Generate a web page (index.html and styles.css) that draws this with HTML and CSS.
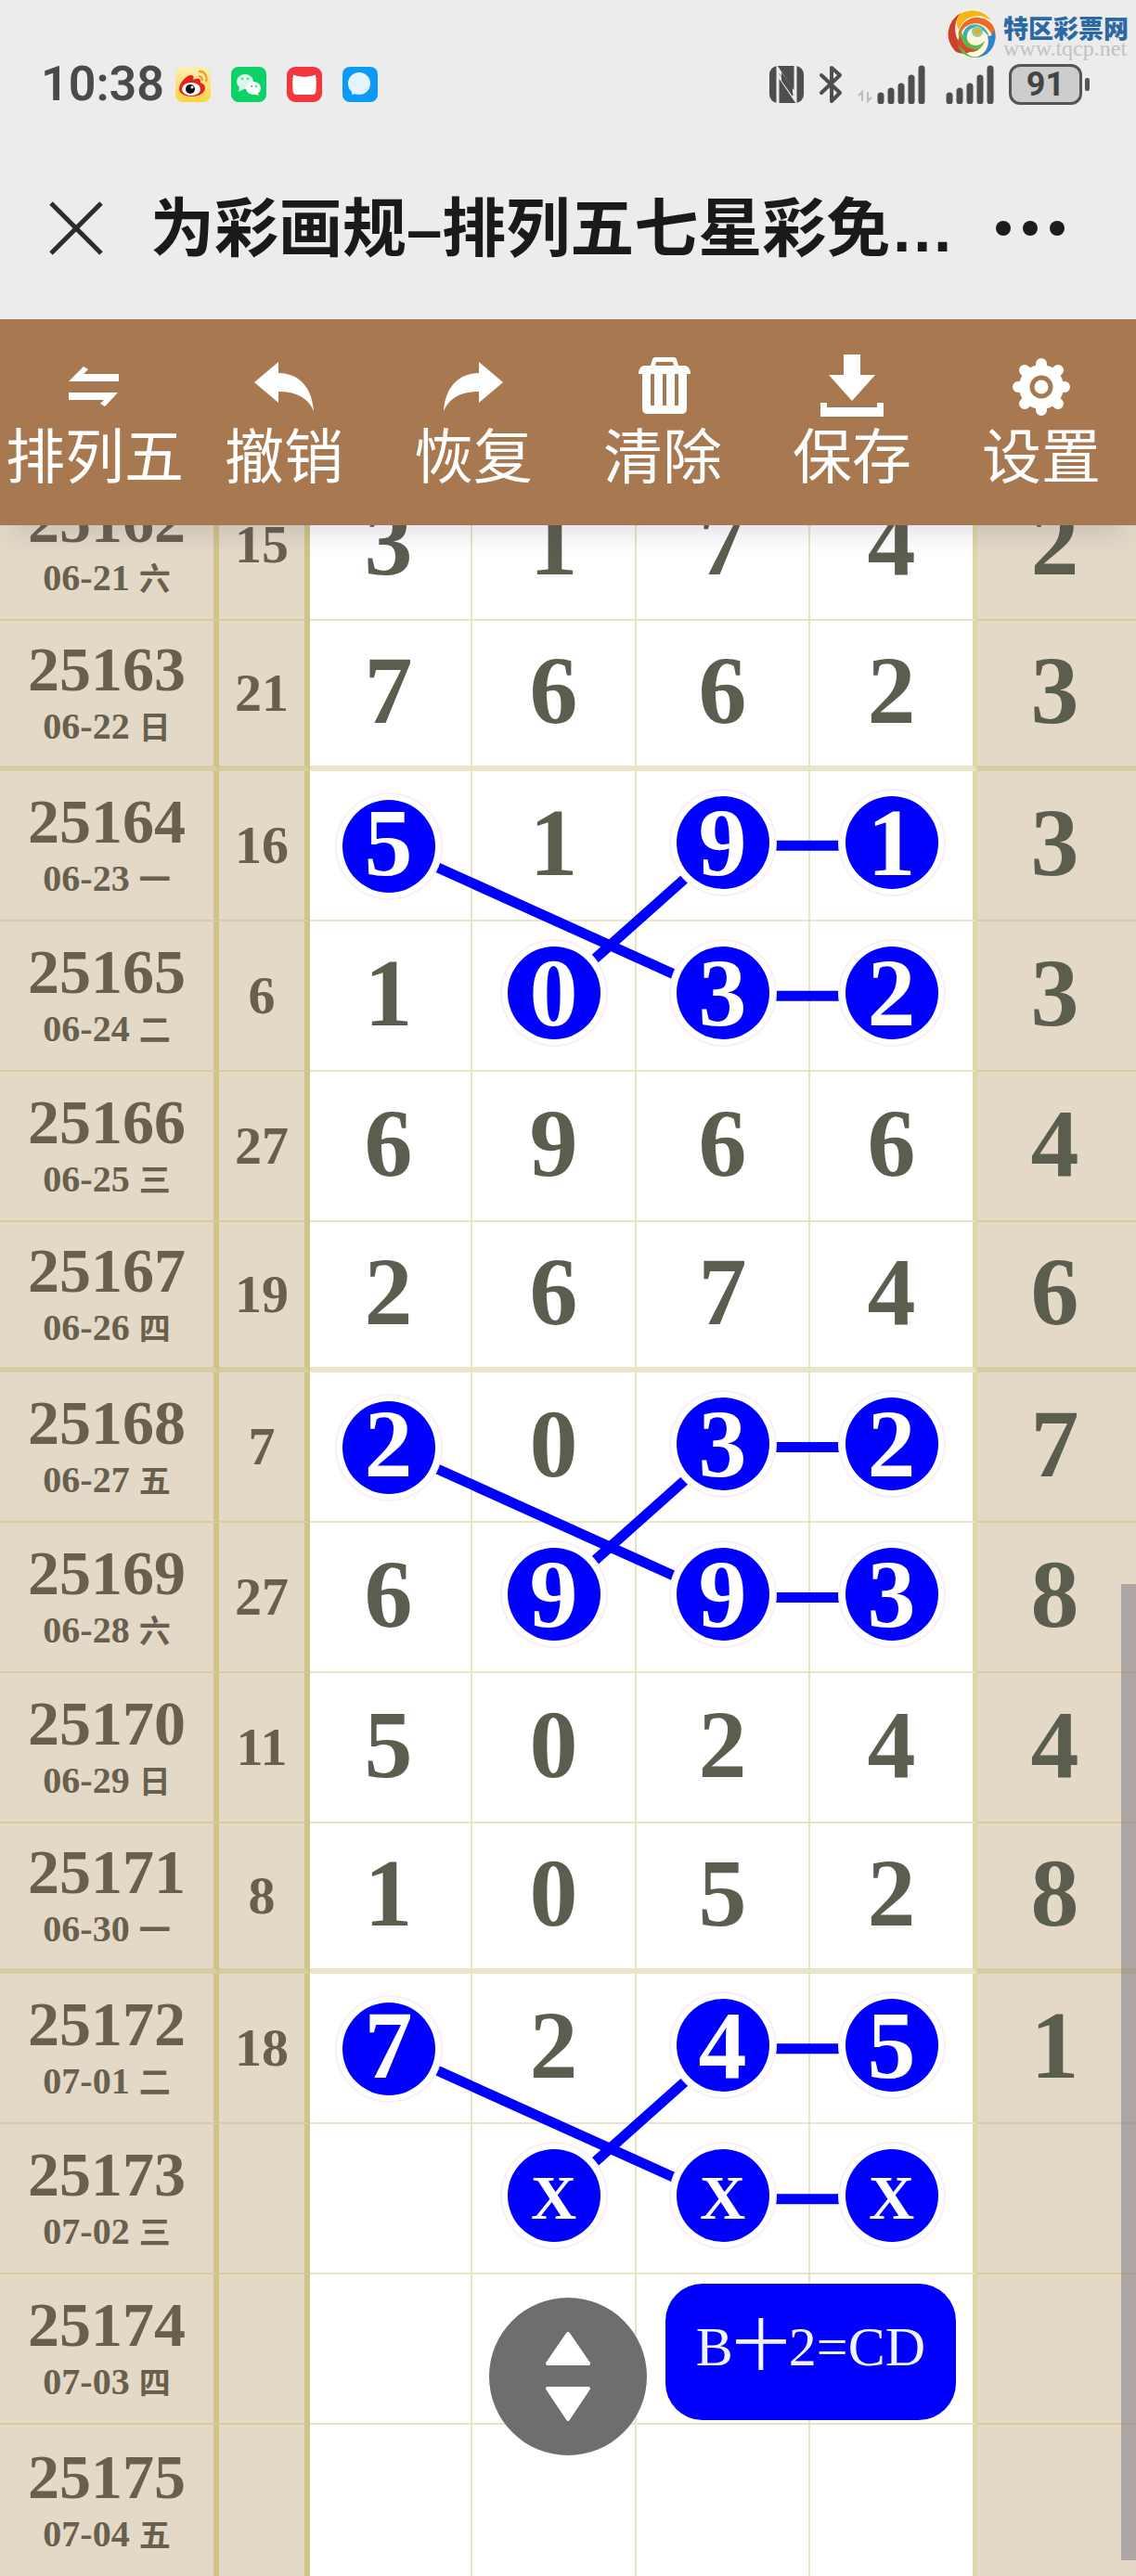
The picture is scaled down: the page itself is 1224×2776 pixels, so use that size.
FILE: index.html
```html
<!DOCTYPE html>
<html lang="zh-CN">
<head>
<meta charset="utf-8">
<meta name="viewport" content="width=device-width, initial-scale=1">
<title>为彩画规</title>
<link rel="stylesheet" href="styles.css">
</head>
<body>
<header class="header">
  <div class="status">
    <div class="status-side">
      <span class="clock">10:38</span>
      <div class="apps">
        <svg class="app" viewBox="0 0 38 38" aria-hidden="true"><defs><linearGradient id="wb" x2="0" y2="1"><stop offset="0" stop-color="#ffedb8"/><stop offset="1" stop-color="#ffd23c"/></linearGradient></defs><rect width="38" height="38" rx="8" fill="url(#wb)"/><path d="M4 24C4 17 12 9 17 9c3 0 3 3 2 5 4-2 9-2 8 3 3 1 5 3 5 6 0 5-7 9-14 9S4 29 4 24z" fill="#e1251b"/><ellipse cx="17" cy="24" rx="10" ry="7" fill="#fff"/><circle cx="16" cy="24" r="5" fill="#111"/><circle cx="18" cy="22" r="1.500" fill="#fff"/><path d="M25 5c6-1 10 5 8 11M25 10c3 0 4 2 4 5" fill="none" stroke="#e99a23" stroke-width="2"/></svg>
        <svg class="app" viewBox="0 0 38 38" aria-hidden="true"><rect width="38" height="38" rx="8" fill="#0bd266"/><ellipse cx="15" cy="16" rx="9" ry="8" fill="#d9f8e5"/><path d="M9 21l-1 6 6-3z" fill="#d9f8e5"/><ellipse cx="24" cy="23" rx="8" ry="7" fill="#fff"/><path d="M28 27l2 4-6-2z" fill="#fff"/><g fill="#0bd266"><circle cx="12" cy="13" r="1"/><circle cx="18" cy="13" r="1"/><circle cx="22" cy="21" r="1"/><circle cx="27" cy="21" r="1"/></g></svg>
        <svg class="app" viewBox="0 0 38 38" aria-hidden="true"><rect width="38" height="38" rx="9" fill="#f2383c"/><path d="M7 9c1-1 3 1 5 1 4 1 10 1 14 0 2 0 4-2 5-1 1 4 1 15 0 19-1 2-3 2-5 2H12c-2 0-4 0-5-2-1-4-1-15 0-19z" fill="#fff"/></svg>
        <svg class="app" viewBox="0 0 38 38" aria-hidden="true"><rect width="38" height="38" rx="8" fill="#0d99f7"/><circle cx="18" cy="18" r="12" fill="#e4f4ff"/><path d="M10 23l0 7 8-2z" fill="#e4f4ff"/></svg>
      </div>
    </div>
    <div class="status-side status-right">
      <svg class="nfc" viewBox="0 0 37 40" aria-hidden="true"><rect width="37" height="40" rx="9" fill="#4e4e4e"/><path d="M9 40V3L28 31M28 0v37L9 9" fill="none" stroke="#ececec" stroke-width="3"/><path d="M13 16l12 17V23L13 7z" fill="#4e4e4e"/></svg>
      <svg class="bt" viewBox="0 0 26 42" aria-hidden="true"><path d="M3 11l20 19-9 9V3l9 8L3 30" fill="none" stroke="#4e4e4e" stroke-width="4" stroke-linejoin="round" stroke-linecap="round"/></svg>
      <svg class="cell cell-data" viewBox="0 0 73 42" aria-hidden="true"><path d="M5 39V29l-4 4M11 29v10l4-4" fill="none" stroke="#bdbdbd" stroke-width="2"/><path d="M25 33v6M36 28v11M47 23v16M58 14v25M69 4v35" stroke="#4e4e4e" stroke-width="7" stroke-linecap="round"/></svg>
      <svg class="cell" viewBox="0 0 52 42" aria-hidden="true"><path d="M4 33v6M15 28v11M26 23v16M37 14v25M48 4v35" stroke="#4e4e4e" stroke-width="7" stroke-linecap="round"/></svg>
      <span class="battery">91</span>
    </div>
  </div>
  <div class="titlebar">
    <button class="plain" aria-label="关闭"><svg class="close" viewBox="0 0 60 60"><path d="M3 3l54 54M57 3L3 57" stroke="#2c2c2c" stroke-width="5"/></svg></button>
    <h1 class="title">为彩画规–排列五七星彩免…</h1>
    <button class="plain" aria-label="更多"><svg class="more" viewBox="0 0 76 16"><g fill="#1c1c1c"><circle cx="8" cy="8" r="8"/><circle cx="37" cy="8" r="8"/><circle cx="66" cy="8" r="8"/></g></svg></button>
  </div>
  <a class="brand" href="#">
    <svg class="swirl" viewBox="0 0 52 52" aria-hidden="true"><circle cx="26" cy="26" r="26" fill="#fff6dc"/><path d="M8 45A26 26 0 0 1 14 4C3 18 8 38 24 46 18 49 12 48 8 45z" fill="#c9422e"/><path d="M13 5A26 26 0 0 1 48 13C36 3 18 6 12 22 9 17 9 10 13 5z" fill="#f7b51d"/><path d="M12 24C17 8 35 4 47 15c5 6 6 15 3 21C49 20 32 8 18 20c-4 4-4 10-2 15-4-3-5-7-4-11z" fill="#f06a2a"/><path d="M17 25C22 11 43 14 45 31c-7-13-22-15-24-3-1 4 1 8 4 11-6-2-10-8-8-14z" fill="#39b0b8"/><path d="M50 22c5 14-4 30-21 30 12-3 17-13 14-23 3 1 6-2 7-7z" fill="#2e86c8"/><path d="M20 29c1 10 12 14 20 5-3 10-13 15-22 9 3 8 12 11 22 6-10 6-23 3-28-8-2-7 1-15 3-18 0 3 1 6 5 6z" fill="#62b54b"/><path d="M14 29c2 10 10 16 20 14-6 5-17 4-22-4-2-4 0-8 2-10z" fill="#d9482f"/><circle cx="32" cy="24" r="6" fill="#8ccf9e"/><circle cx="32" cy="24" r="3" fill="#f5a623"/></svg>
    <span class="brand-text"><strong class="brand-name">特区彩票网</strong><span class="brand-url">www.tqcp.net</span></span>
  </a>
</header>

<nav class="toolbar">
  <button class="tool"><svg class="tool-icon" viewBox="0 0 72 72"><path d="M8 30L24 14l5 3-5 5h38v8zM8 42h53L47 57l-5-3 4-4H8z"/></svg>排列五</button>
  <button class="tool"><svg class="tool-icon" viewBox="0 0 72 72"><path d="M4 31L30 9v12c20 0 36 13 38 41-6-14-18-21-38-21v12z"/></svg>撤销</button>
  <button class="tool"><svg class="tool-icon" viewBox="0 0 72 72"><path d="M68 31L42 9v12C22 21 6 34 4 62c6-14 18-21 38-21v12z"/></svg>恢复</button>
  <button class="tool"><svg class="tool-icon" viewBox="0 0 72 72"><path fill-rule="evenodd" d="M23 13l2-7q1-2 3-2h20q2 0 3 2l2 7h7q5 1 6 7v2h-4v37q0 6-6 6H20q-6 0-6-6V22h-4v-2q1-6 6-7zm5 0h20l-1-4H29zM23 22v34h4V22zm13 0v34h4V22zm13 0v34h4V22z"/></svg>清除</button>
  <button class="tool"><svg class="tool-icon" viewBox="0 0 72 72"><path d="M27 1h18v22h16L36 51 11 23h16zM2 53h7v5h54v-5h7v15H2z"/></svg>保存</button>
  <button class="tool"><svg class="tool-icon" viewBox="0 0 72 72"><circle cx="36" cy="36" r="24"/><path d="M36 11v50M11 36h50M18 18l36 36M54 18L18 54" stroke="#fff" stroke-width="12" stroke-linecap="round"/><circle cx="36" cy="36" r="10" fill="#fff" stroke="#a87950" stroke-width="5"/></svg>设置</button>
</nav>

<main class="chart">
  <table class="grid">
    <colgroup><col class="c-issue"><col class="c-sum"><col class="c-a"><col class="c-b"><col class="c-c"><col class="c-d"><col class="c-e"></colgroup>
    <tbody>
      <tr><th scope="row">25162<small>06-21 <b>六</b></small></th><td class="sum">15</td><td>3</td><td>1</td><td>7</td><td>4</td><td class="tail">2</td></tr>
      <tr class="week-end"><th scope="row">25163<small>06-22 <b>日</b></small></th><td class="sum">21</td><td>7</td><td>6</td><td>6</td><td>2</td><td class="tail">3</td></tr>
      <tr><th scope="row">25164<small>06-23 <b>一</b></small></th><td class="sum">16</td><td><span class="ball ball-start">5</span></td><td>1</td><td><span class="ball">9</span></td><td><span class="ball">1</span></td><td class="tail">3</td></tr>
      <tr><th scope="row">25165<small>06-24 <b>二</b></small></th><td class="sum">6</td><td>1</td><td><span class="ball">0</span></td><td><span class="ball">3</span></td><td><span class="ball">2</span></td><td class="tail">3</td></tr>
      <tr><th scope="row">25166<small>06-25 <b>三</b></small></th><td class="sum">27</td><td>6</td><td>9</td><td>6</td><td>6</td><td class="tail">4</td></tr>
      <tr class="week-end"><th scope="row">25167<small>06-26 <b>四</b></small></th><td class="sum">19</td><td>2</td><td>6</td><td>7</td><td>4</td><td class="tail">6</td></tr>
      <tr><th scope="row">25168<small>06-27 <b>五</b></small></th><td class="sum">7</td><td><span class="ball ball-start">2</span></td><td>0</td><td><span class="ball">3</span></td><td><span class="ball">2</span></td><td class="tail">7</td></tr>
      <tr><th scope="row">25169<small>06-28 <b>六</b></small></th><td class="sum">27</td><td>6</td><td><span class="ball">9</span></td><td><span class="ball">9</span></td><td><span class="ball">3</span></td><td class="tail">8</td></tr>
      <tr><th scope="row">25170<small>06-29 <b>日</b></small></th><td class="sum">11</td><td>5</td><td>0</td><td>2</td><td>4</td><td class="tail">4</td></tr>
      <tr class="week-end"><th scope="row">25171<small>06-30 <b>一</b></small></th><td class="sum">8</td><td>1</td><td>0</td><td>5</td><td>2</td><td class="tail">8</td></tr>
      <tr><th scope="row">25172<small>07-01 <b>二</b></small></th><td class="sum">18</td><td><span class="ball ball-start">7</span></td><td>2</td><td><span class="ball">4</span></td><td><span class="ball">5</span></td><td class="tail">1</td></tr>
      <tr><th scope="row">25173<small>07-02 <b>三</b></small></th><td class="sum"></td><td></td><td><span class="ball ball-x">X</span></td><td><span class="ball ball-x">X</span></td><td><span class="ball ball-x">X</span></td><td class="tail"></td></tr>
      <tr><th scope="row">25174<small>07-03 <b>四</b></small></th><td class="sum"></td><td></td><td></td><td></td><td></td><td class="tail"></td></tr>
      <tr><th scope="row">25175<small>07-04 <b>五</b></small></th><td class="sum"></td><td></td><td></td><td></td><td></td><td class="tail"></td></tr>
    </tbody>
  </table>
  <svg class="links" viewBox="0 0 1224 2268" preserveAspectRatio="none" aria-hidden="true">
    <defs><path id="link" d="M419 0L778 162M596 162L778 0M778 0H960M778 162H960"/></defs>
    <g fill="none" stroke="#00f" stroke-width="11"><use href="#link" y="404"/><use href="#link" y="1052"/><use href="#link" y="1700"/></g>
  </svg>
  <button class="scroller" aria-label="滚动"><svg class="arrows" viewBox="0 0 50 98"><path d="M25 3L47 35H3zM3 62h44L25 95z" fill="#fff" stroke="#fff" stroke-width="4" stroke-linejoin="round"/></svg></button>
  <div class="note">B十2=CD</div>
  <div class="thumb"></div>
</main>
</body>
</html>
```
FILE: styles.css
```css
* { box-sizing: border-box; }
body {
  margin: 0;
  background: #fff;
  font-family: "Noto Sans CJK SC", sans-serif;
}
button { margin: 0; padding: 0; border: 0; background: none; font: inherit; color: inherit; }
svg { display: block; }

/* header */
.header { position: relative; padding-bottom: 34px; background: #ececec; }
.status {
  display: flex;
  justify-content: space-between;
  align-items: center;
  height: 182px;
  padding: 0 50px 0 44px;
}
.status-side, .apps { display: flex; align-items: center; }
.clock { font: 600 52px/60px Roboto, sans-serif; color: #4a4a4a; }
.apps { gap: 22px; margin-left: 12px; }
.app { width: 38px; height: 38px; }
.nfc { width: 37px; height: 40px; }
.bt { width: 26px; height: 42px; margin-left: 16px; }
.cell { width: 52px; height: 42px; margin-left: 22px; }
.cell-data { width: 73px; margin-left: 16px; }
.battery {
  position: relative;
  width: 79px;
  height: 44px;
  margin: 0 8px 0 16px;
  border: 3px solid #555;
  border-radius: 12px;
  background: #cdcdcd;
  font: 700 36px/38px Roboto, sans-serif;
  text-align: center;
  color: #444;
}
.battery::after {
  content: "";
  position: absolute;
  top: 12px;
  right: -11px;
  width: 5px;
  height: 14px;
  border-radius: 2px;
  background: #555;
}
.titlebar {
  display: flex;
  align-items: center;
  height: 128px;
  padding: 0 75px 0 52px;
}
.close { width: 60px; height: 60px; }
.more { width: 76px; height: 16px; }
.title {
  flex: 1;
  margin: 0 0 0 50px;
  padding-top: 4px;
  font: 700 69px/96px "Liberation Sans", "Noto Sans CJK SC", sans-serif;
  white-space: nowrap;
  color: #1a1a1a;
}
.brand {
  position: absolute;
  top: 10px;
  right: 8px;
  display: flex;
  gap: 8px;
  text-decoration: none;
}
.swirl { width: 52px; height: 52px; }
.brand-text { display: flex; flex-direction: column; }
.brand-name { height: 28px; font-size: 27px; line-height: 40px; font-weight: 900; color: #2b69a3; }
.brand-url { font: 24px/28px "Liberation Serif", serif; color: #c2c2c2; }

/* toolbar */
.toolbar {
  position: relative;
  z-index: 5;
  display: grid;
  grid-template-columns: repeat(6, 1fr);
  background: #a87950;
  box-shadow: 0 24px 24px -14px rgba(60, 50, 90, 0.14);
}
.tool {
  display: flex;
  flex-direction: column;
  align-items: center;
  padding: 37px 0 45px;
  font-size: 64px;
  line-height: 68px;
  white-space: nowrap;
  color: #fff;
}
.tool-icon { width: 72px; height: 72px; fill: #fff; }

/* chart; the first row slides under the toolbar */
.chart { position: relative; margin-top: -59px; font-family: "Liberation Serif", "Noto Sans CJK SC", serif; }
.grid { width: 100%; table-layout: fixed; border-collapse: separate; border-spacing: 0; }
.c-issue { width: 236px; }
.c-sum { width: 98px; }
.c-a { width: 175px; }
.c-b { width: 177px; }
.c-c { width: 187px; }
.c-d { width: 180px; }
.c-e { width: 171px; }
.grid tr { height: 162px; }
.grid tr:last-child { height: 163px; }
.grid th, .grid td {
  padding: 0;
  border: 0 solid rgba(190, 184, 100, 0.36);
  border-width: 0 2px 2px 0;
  text-align: center;
  vertical-align: middle;
  font-weight: 700;
  color: #5b5d4e;
}
.grid td { padding-bottom: 6px; font-size: 104px; line-height: 108px; }
.grid th { border-right: 6px solid rgba(190, 176, 80, 0.5); background: #e4d9c7; font-size: 68px; line-height: 72px; color: #67604f; }
.grid td.sum { padding: 0; border-right: 6px solid rgba(190, 176, 80, 0.5); background: #e4d9c7; font-size: 58px; line-height: 64px; color: #67604f; }
.grid td:nth-child(3), .grid td.tail { padding-right: 4px; }
.grid td:nth-child(6) { border-right: 5px solid rgba(190, 176, 80, 0.5); }
.grid td.tail { border-right: 0; background: #e4d9c7; }
.grid .week-end > * { border-bottom-width: 6px; }
.grid tr:last-child > * { border-bottom: 0; }
.grid small { display: block; font-size: 40px; line-height: 52px; }
.grid b { font: 700 34px/40px "Noto Sans CJK SC", sans-serif; }

.ball {
  position: relative;
  z-index: 2;
  display: block;
  width: 100px;
  height: 100px;
  margin: 0 auto;
  border-radius: 50%;
  background: #00f;
  box-shadow: 0 0 0 6px #fff, 0 0 0 8px #f5f1f5;
  line-height: 100px;
  color: #fff;
}
.ball-start { top: 4px; line-height: 92px; }
.ball-x { font-size: 68px; line-height: 104px; }
.links { position: absolute; inset: 0; z-index: 1; width: 100%; height: 100%; pointer-events: none; }

/* floating parts of the chart */
.scroller {
  position: absolute;
  z-index: 3;
  left: 50%;
  bottom: 130px;
  display: grid;
  place-items: center;
  width: 170px;
  height: 170px;
  margin-left: -85px;
  border-radius: 50%;
  background: #6e6e6e;
}
.arrows { width: 50px; height: 98px; }
.note {
  position: absolute;
  z-index: 3;
  right: 194px;
  bottom: 168px;
  padding: 32px 33px 43px;
  border-radius: 40px;
  background: #00f;
  font-size: 60px;
  line-height: 72px;
  color: #f2f2ff;
}
.thumb {
  position: absolute;
  z-index: 4;
  right: 0;
  bottom: 17px;
  width: 16px;
  height: 1052px;
  background: rgba(120, 115, 128, 0.5);
}
```
